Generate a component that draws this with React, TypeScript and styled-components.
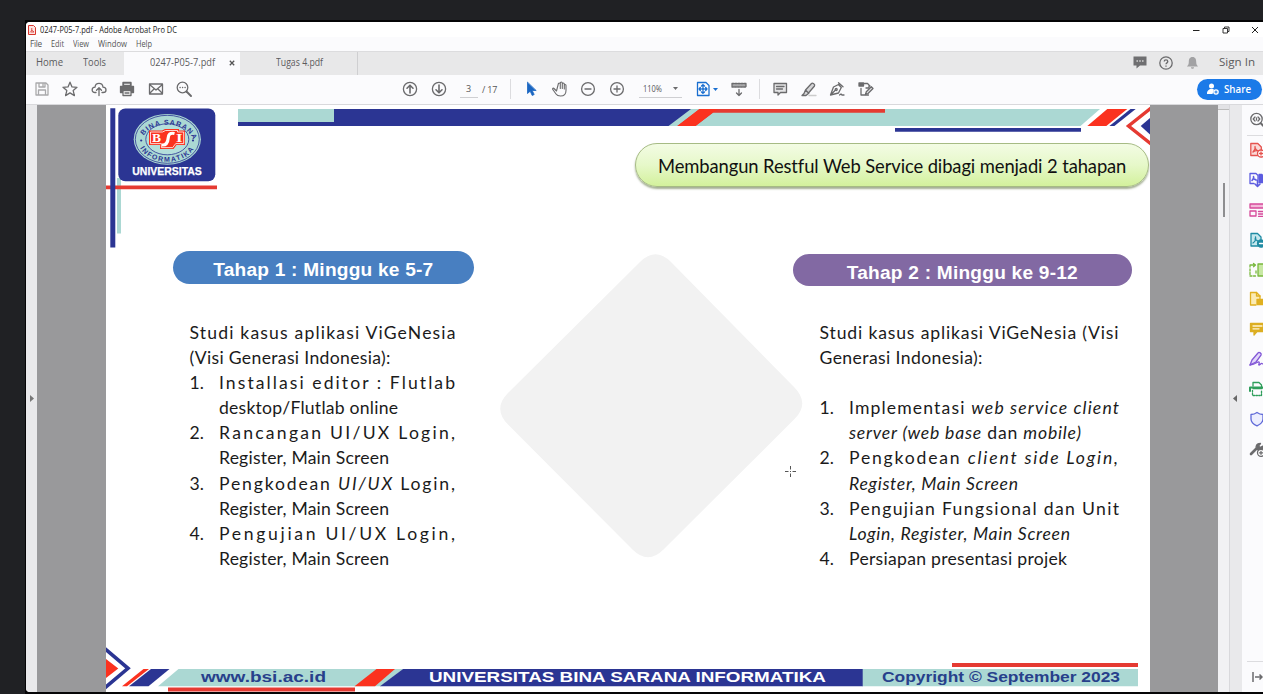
import React, { useLayoutEffect, useRef } from "react";
import styled, { createGlobalStyle } from "styled-components";

const NAVY = "#2b3593";
const RED = "#fb321f";
const LINE_RED = "#e53a32";
const TEAL = "#abd8d3";
const GREY = "#6b6b6d";

const GlobalStyle = createGlobalStyle`
  * { box-sizing: border-box; }
  body { margin: 0; background: #202124; overflow: hidden; }
  svg { display: block; flex: none; overflow: visible; }
`;

/* Text tracked out, or stretched, so that a line fills exactly the given width. */
const FitText = styled.span`
  display: inline-block;
  white-space: pre;
  transform-origin: 0 50%;
`;
const FitBox = styled.span<{ $w: number }>`
  display: inline-block;
  flex: none;
  width: ${(p) => p.$w}px;
  white-space: nowrap;
`;

function Fit({ w, stretch, children }: { w: number; stretch?: boolean; children: React.ReactNode }) {
  const ref = useRef<HTMLSpanElement>(null);
  useLayoutEffect(() => {
    const el = ref.current;
    if (!el) return;
    el.style.letterSpacing = "0px";
    el.style.transform = "none";
    const natural = el.getBoundingClientRect().width;
    if (stretch) {
      el.style.transform = `scaleX(${w / natural})`;
    } else {
      const count = (el.textContent || "").length;
      el.style.letterSpacing = (w - natural) / Math.max(1, count - 1) + "px";
    }
  }, [w, stretch]);
  return (
    <FitBox $w={w}>
      <FitText ref={ref}>{children}</FitText>
    </FitBox>
  );
}

/* ---------- window ---------- */

const Desktop = styled.div`
  height: 694px;
  padding: 20px 0 0 25px;
  overflow: hidden;
  background: #202124;
`;
const Frame = styled.div`
  height: 674px;
  padding: 2px 0 2.5px 1px;
  background: #050506;
`;
const Window = styled.div`
  display: flex;
  flex-direction: column;
  height: 669.5px;
  overflow: hidden;
  border-radius: 4px 0 0 4px;
  background: #fbfbfd;
  font-family: "Open Sans", "Noto Sans", sans-serif;
`;
const TitleBar = styled.div`
  display: flex;
  align-items: center;
  height: 15px;
  padding-left: 2px;
  background: #fff;
  font-size: 8.8px;
  color: #222;
`;
const TitleText = styled.div`
  flex: 1;
  margin-left: 4px;
  line-height: 16px;
`;
const Controls = styled.div`
  display: flex;
  align-items: center;
  gap: 21.5px;
  margin-right: 4px;
`;
const MenuBar = styled.div`
  display: flex;
  gap: 9px;
  height: 14px;
  padding-left: 4px;
  font-size: 8.2px;
  line-height: 13px;
  color: #555;
`;
const TabBar = styled.div`
  display: flex;
  height: 24px;
  background: #e8e8e9;
  border-top: 1px solid #dcdcde;
  font-size: 10.4px;
  line-height: 21px;
  color: #5b5b5d;
`;
const PlainTab = styled.div<{ $w: number; $pad: number }>`
  width: ${(p) => p.$w}px;
  padding-left: ${(p) => p.$pad}px;
`;
const FileTab = styled.div<{ $active?: boolean }>`
  display: flex;
  gap: 14px;
  width: 117px;
  padding-left: ${(p) => (p.$active ? 26 : 35)}px;
  background: ${(p) => (p.$active ? "#fbfbfd" : "transparent")};
  border-right: 1px solid ${(p) => (p.$active ? "#e8e8e9" : "#cfcfd1")};
  svg { margin-top: 7.5px; }
`;
const AccountArea = styled.div`
  display: flex;
  align-items: center;
  height: 21px;
  margin-left: auto;
  padding-right: 8.5px;
  svg + svg { margin-left: 12.5px; }
`;
const SignIn = styled.div`
  margin-left: 20px;
`;
const Toolbar = styled.div`
  display: flex;
  align-items: center;
  height: 30px;
  padding: 0 0 1px 7.5px;
  border-bottom: 1px solid #d9d9dc;
  font-size: 9px;
  color: #555;
`;
const IconGroup = styled.div<{ $gap: number; $ml?: number }>`
  display: flex;
  align-items: center;
  gap: ${(p) => p.$gap}px;
  margin-left: ${(p) => p.$ml || 0}px;
`;
const Field = styled.div<{ $w: number; $ml: number; $pad: number }>`
  display: flex;
  align-items: center;
  justify-content: space-between;
  width: ${(p) => p.$w}px;
  height: 18px;
  margin-left: ${(p) => p.$ml}px;
  padding: 0 ${(p) => p.$pad}px;
  border-bottom: 1px solid #cfcfd2;
`;
const PageTotal = styled.div`
  width: 20px;
  margin-left: 4px;
  white-space: nowrap;
`;
const Divider = styled.div<{ $ml: number }>`
  width: 1px;
  height: 20px;
  margin-left: ${(p) => p.$ml}px;
  background: #dcdcdf;
`;
const ShareButton = styled.div`
  display: flex;
  align-items: center;
  gap: 5px;
  flex: none;
  width: 65px;
  height: 21px;
  margin-left: auto;
  margin-right: 1px;
  padding-left: 10px;
  border-radius: 11px;
  background: #1b7ae8;
  color: #fff;
  font-size: 10.3px;
  font-weight: 600;
`;

/* ---------- work area ---------- */

const Work = styled.div`
  display: flex;
  flex: 1;
  min-height: 0;
`;
const Rail = styled.div<{ $w: number; $pr?: number }>`
  display: flex;
  align-items: center;
  justify-content: center;
  width: ${(p) => p.$w}px;
  padding-right: ${(p) => p.$pr || 0}px;
  background: #e9e9eb;
`;
const Canvas = styled.div`
  display: flex;
  width: 1181px;
  padding: 0 69px;
  background: #99999b;
`;
const ScrollTrack = styled.div`
  display: flex;
  flex-direction: column;
  align-items: center;
  width: 12px;
  background: #f1f1f4;
  border-right: 1px solid #d8d8dc;
`;
const ScrollCap = styled.div`
  width: 11px;
  height: 5px;
  background: #e2e2e5;
  border-bottom: 1px solid #bbb;
`;
const Thumb = styled.div`
  width: 2px;
  height: 34px;
  margin-top: 73px;
  background: #8e8e91;
`;
const ToolPane = styled.div`
  display: flex;
  flex-direction: column;
  width: 21px;
  padding: 7px 0 0 7px;
  overflow: hidden;
  background: #fbfbfd;
`;
const ToolSlot = styled.div<{ $h?: number }>`
  display: flex;
  align-items: center;
  flex: none;
  height: ${(p) => p.$h || 29.9}px;
`;
const PaneRule = styled.div`
  flex: none;
  height: 1px;
  margin: 7px 0 -1px -2px;
  background: #dcdcdf;
`;
const PaneFoot = styled.div`
  margin: auto 0 0 -2px;
  height: 31px;
  padding: 9px 0 0 4px;
  border-top: 1px solid #dcdcdf;
`;

/* ---------- slide ---------- */

const Slide = styled.div`
  display: flex;
  flex-direction: column;
  width: 1043.5px;
  flex: none;
  background: #fff;
  overflow: hidden;
`;
const SlideHeader = styled.div`
  display: flex;
  height: 146px;
`;
const HeaderRight = styled.div`
  display: flex;
  flex-direction: column;
  align-items: flex-end;
  width: 911px;
`;
const TitlePill = styled.div`
  display: flex;
  align-items: center;
  justify-content: center;
  width: 514px;
  height: 44px;
  padding-top: 1px;
  border: 1px solid #a6bb84;
  border-radius: 22px;
  background: linear-gradient(#f3fce4, #e6f8c9 50%, #d3f19c);
  box-shadow: 0 2px 2px rgba(90, 110, 60, 0.55);
  font-family: Lato, Carlito, sans-serif;
  font-size: 18.4px;
  color: #111;
`;
const Columns = styled.div`
  display: flex;
  height: 392px;
  padding-left: 66.5px;
`;
const Stage = styled.div<{ $w: number; $top: number }>`
  width: ${(p) => p.$w}px;
  padding-top: ${(p) => p.$top}px;
`;
const StageTitle = styled.div<{ $color: string }>`
  display: flex;
  align-items: center;
  justify-content: center;
  height: 32.5px;
  padding-top: 6px;
  border-radius: 17px;
  background: ${(p) => p.$color};
  color: #fff;
  font: bold 19.1px "Liberation Sans", Arial, sans-serif;
`;
const StageText = styled.div<{ $pad: number; $top: number }>`
  padding: ${(p) => p.$top}px 0 0 ${(p) => p.$pad}px;
  font-family: Lato, Carlito, sans-serif;
  font-size: 17.6px;
  line-height: 25.2px;
  color: #1b1b1b;
`;
const Line = styled.div`
  display: flex;
  height: 25.2px;
  white-space: nowrap;
`;
const Num = styled.div`
  width: 29.5px;
`;
const Middle = styled.div`
  width: 318.5px;
  padding: 3px 0 0 25px;
`;
const Footer = styled.div`
  position: relative;
  display: flex;
  height: 48px;
  padding-top: 26px;
  font: bold 14px/17px "Liberation Sans", Arial, sans-serif;
  color: #fff;
`;
const FooterArt = styled.svg`
  position: absolute;
  left: 0;
  top: 0;
`;
const FooterLabel = styled.div<{ $ml: number; $w: number; $dark?: boolean }>`
  position: relative;
  width: ${(p) => p.$w}px;
  margin-left: ${(p) => p.$ml}px;
  white-space: nowrap;
  color: ${(p) => (p.$dark ? "#27408b" : "#fff")};
`;

/* ---------- icons ---------- */

function Icon({ s = 16, c = GREY, w = 1.3, children }: { s?: number; c?: string; w?: number; children: React.ReactNode }) {
  return (
    <svg width={s} height={s} viewBox="0 0 16 16" fill="none" stroke={c} strokeWidth={w} strokeLinejoin="round" strokeLinecap="round">
      {children}
    </svg>
  );
}

const Caret = ({ c = GREY }: { c?: string }) => (
  <svg width="5" height="3" viewBox="0 0 5 3"><path d="M0 0h5L2.5 3z" fill={c} /></svg>
);

function Logo() {
  return (
    <svg width="132" height="146" viewBox="106 105 132 146">
      <defs>
        <path id="arcTop" d="M141.500 141A26 19 0 0 1 193 141" />
        <path id="arcBottom" d="M137.800 139.500A29.500 22.300 0 0 0 196.800 139.500" />
      </defs>
      <path d="M117 178h4v55.500h-4z" fill={TEAL} />
      <path d="M106 185.600h111v3.600H106z" fill={LINE_RED} />
      <path d="M110.300 108.300h5v139.200h-5z" fill={NAVY} />
      <rect x="118.300" y="108.400" width="97" height="72.800" rx="7" fill={NAVY} />
      <ellipse cx="167.300" cy="139.300" rx="33.600" ry="25.400" fill={TEAL} />
      <ellipse cx="167.300" cy="139.300" rx="32" ry="24" fill="none" stroke={NAVY} strokeWidth="0.800" />
      <ellipse cx="167.300" cy="139.300" rx="21.500" ry="15.500" fill="#b4dfdb" stroke={NAVY} strokeWidth="0.800" />
      <g fontFamily="Liberation Sans, Arial, sans-serif" fontWeight="bold" fill={NAVY} fontSize="7">
        <text textLength="58"><textPath href="#arcTop" startOffset="6">BINA SARANA</textPath></text>
        <text textLength="62"><textPath href="#arcBottom" startOffset="9">INFORMATIKA</textPath></text>
      </g>
      <circle cx="141.200" cy="140.500" r="1.100" fill={NAVY} />
      <circle cx="193" cy="140.500" r="1.100" fill={NAVY} />
      <path d="M149 130.500h13l3-1.500h14v1.500h6V145h-8.500l-3 4h-13.500v-4h-11z" fill={RED} />
      <path d="M150.500 132h12l3-1.500h12v1.500h6.200v11.600h-8l-3 4h-11.300v-4h-10.900z" fill="none" stroke="#fff" strokeWidth="0.800" />
      <path d="M174.500 133.500c-4.500-1-6 1-6.300 4.300-.3 4-1.700 7.500-6.200 7.200" fill="none" stroke="#fff" strokeWidth="3.200" />
      <g fontFamily="Liberation Serif, Times New Roman, serif" fontWeight="bold" fill="#fff">
        <text x="152" y="142.300" fontSize="12" textLength="9" lengthAdjust="spacingAndGlyphs">B</text>
        <text x="176" y="142.300" fontSize="12" textLength="6.500" lengthAdjust="spacingAndGlyphs">I</text>
      </g>
      <text x="132.300" y="174.500" fill="#fff" stroke="#fff" strokeWidth="0.250" fontFamily="Liberation Sans, Arial, sans-serif" fontWeight="bold" fontSize="10.300" textLength="69.500" lengthAdjust="spacingAndGlyphs">UNIVERSITAS</text>
    </svg>
  );
}

function BannerArt() {
  return (
    <svg width="911" height="38" viewBox="238 105 911 38">
      <path d="M238 109h862l-19.500 17H238z" fill={TEAL} />
      <path d="M334 109h357l-22.500 17H238v-4h96z" fill={NAVY} />
      <path d="M699.500 109H885v3.800H713L695.500 126h-18.200z" fill={LINE_RED} />
      <path d="M699.500 109h18L695.500 126h-18.200z" fill={RED} />
      <path d="M895 128h186v3.700H895z" fill={NAVY} />
      <path d="M1107.300 109h20l-21 17h-19z" fill={RED} />
      <path d="M1130.500 109h5.200l-21.300 17h-5z" fill={NAVY} />
      <path d="M1151 108l-22.500 18L1151 144" fill="none" stroke={LINE_RED} strokeWidth="3.400" />
      <path d="M1150 118l-9.300 8 9.300 8.500z" fill={NAVY} />
    </svg>
  );
}

function Diamond() {
  return (
    <svg width="306" height="306" viewBox="499 254 306 306">
      <path d="M640 262q15.500-15.500 31 0L794.500 387.500q15.500 16 0 31.500L663.500 549.500q-15.500 15.500-31 0L508 424.500q-15.500-16 0-31.500z" fill="#f2f2f2" />
      <path d="M785 471.500h3.500M790 471.500h1M792.500 471.500h3.500M790.500 466v3.500M790.500 473.500v3.500" stroke="#555" strokeWidth="1" />
    </svg>
  );
}

const sideIcons: { c: string; art: React.ReactNode }[] = [
  { c: "#e5534f", art: <><path d="M9 13.500H1.800V1.500h7l3.500 3.500v3" fill="#fad9d7" /><path d="M4 10c2-2 2.500-4 2-5.500M6 6c1 2 2 3 4 3M4 10c2-1.500 4-2 6-1" /><circle cx="12" cy="11.500" r="3.500" fill="#fff" /><path d="M10.500 11.500h3M12 10v3" /></> },
  { c: "#5c5ce0", art: <><path d="M5 11.500H1V1.500h6l2 2V7" /><path d="M10 2.500h3l1 1.500h4v6.500h-8z" fill="#5c5ce0" /><path d="M3 8.500c2-2 2-3 1.500-4M4.500 6.500L7 8M8.500 8v6M6 12l2.500 2.500L11 12" strokeWidth="1.600" /></> },
  { c: "#d6499a", art: <><path d="M1 2h15v4H1z" fill="#f3b9da" /><path d="M1 9h6v5H1zM9.500 9.500H16M9.500 12H16M9.500 14.300H16" /></> },
  { c: "#1f8ba3", art: <><path d="M9 14H2V1.500h6.500L12 5v3" fill="#c6e8ee" /><path d="M4 11c3-2 3-4 2.500-6M6 7l4 3" /><circle cx="12" cy="11.500" r="3.500" fill="#1f8ba3" /><path d="M10.500 11.500h3" stroke="#fff" /></> },
  { c: "#79b83e", art: <><path d="M9 2h7v12H9z" fill="#c8e8a4" /><path d="M1 7v7h6M7 11V8" strokeDasharray="2 1.500" /><path d="M1 5V3h5M4.500 1.500L6.500 3 4.500 4.700" /></> },
  { c: "#e0b020", art: <><path d="M7 14H1.500V1.500h6L11 5v3" fill="#fbebb4" /><path d="M7.500 1.500V5H11" /><path d="M8 8.500h8v5H8z" fill="#e0b020" /></> },
  { c: "#dcae22", art: <><path d="M1.500 2.500h14v8H8l-3 3.500v-3.500H1.500z" fill="#dcae22" /><path d="M4 5h9M4 7.800h6" stroke="#fff4d0" /></> },
  { c: "#8257d6", art: <><path d="M1 14l2-5L9 2c1-1.500 4 .500 3 2.200L7 11z" fill="#e2d6fa" /><path d="M1 14c6-.500 8-4 9-3s-1 3 0 3 2-2 3-1.500 1 1 3 .5" /></> },
  { c: "#2e9e5b", art: <><path d="M4 5V1.500h6L12.500 4v3M4 7.500h9" /><path d="M1 10V6.500h15V10" strokeWidth="2" /><path d="M3.500 9.500v5h9v-5" strokeDasharray="1.500 1.300" /></> },
  { c: "#5f69d8", art: <path d="M8 1.500c2 1.500 4 2 6 2v4.500c0 3.500-3 5.500-6 6.800C5 13.500 2 11.500 2 8V3.500c2 0 4-.500 6-2z" fill="#eceefe" /> },
  { c: "#6b6b6d", art: <><path d="M2 13L7 8" strokeWidth="2.600" /><path d="M11.500 2.500L9.500 5l1.500 1.500 3-1.500c.5 3-2 5-5 4C6 7.500 6.500 2.500 11.500 2.500z" fill="#6b6b6d" /><circle cx="12" cy="11.800" r="3.500" fill="#fff" /><path d="M10.500 11.800h3M12 10.300v3" /></> },
];

/* ---------- content ---------- */

type Row = { n?: string; w: number; t: React.ReactNode };

const stageOne: Row[] = [
  { w: 266, t: "Studi kasus aplikasi ViGeNesia" },
  { w: 201, t: "(Visi Generasi Indonesia):" },
  { n: "1.", w: 236, t: "Installasi editor : Flutlab" },
  { n: " ", w: 179, t: "desktop/Flutlab online" },
  { n: "2.", w: 236, t: "Rancangan UI/UX Login," },
  { n: " ", w: 170, t: "Register, Main Screen" },
  { n: "3.", w: 236, t: <>Pengkodean <i>UI/UX</i> Login,</> },
  { n: " ", w: 170, t: "Register, Main Screen" },
  { n: "4.", w: 236, t: "Pengujian UI/UX Login," },
  { n: " ", w: 170, t: "Register, Main Screen" },
];

const stageTwo: Row[] = [
  { w: 299, t: "Studi kasus aplikasi ViGeNesia (Visi" },
  { w: 163, t: "Generasi Indonesia):" },
  { w: 0, t: "" },
  { n: "1.", w: 270, t: <>Implementasi <i>web service client</i></> },
  { n: " ", w: 232, t: <><i>server (web base</i> dan <i>mobile)</i></> },
  { n: "2.", w: 269, t: <>Pengkodean <i>client side Login,</i></> },
  { n: " ", w: 169, t: <i>Register, Main Screen</i> },
  { n: "3.", w: 270, t: "Pengujian Fungsional dan Unit" },
  { n: " ", w: 221, t: <i>Login, Register, Main Screen</i> },
  { n: "4.", w: 218, t: "Persiapan presentasi projek" },
];

const Rows = ({ rows }: { rows: Row[] }) => (
  <>
    {rows.map((r, i) => (
      <Line key={i}>
        {r.n && <Num>{r.n}</Num>}
        {r.w > 0 && <Fit w={r.w}>{r.t}</Fit>}
      </Line>
    ))}
  </>
);

function SlidePage() {
  return (
    <Slide>
      <SlideHeader>
        <Logo />
        <HeaderRight>
          <BannerArt />
          <TitlePill><Fit w={468}>Membangun Restful Web Service dibagi menjadi 2 tahapan</Fit></TitlePill>
        </HeaderRight>
      </SlideHeader>
      <Columns>
        <Stage $w={301.5} $top={0}>
          <StageTitle $color="#487fc1"><Fit w={220}>Tahap 1 : Minggu ke 5-7</Fit></StageTitle>
          <StageText $pad={17} $top={36}><Rows rows={stageOne} /></StageText>
        </Stage>
        <Middle><Diamond /></Middle>
        <Stage $w={339.5} $top={2.5}>
          <StageTitle $color="#8269a3"><Fit w={231}>Tahap 2 : Minggu ke 9-12</Fit></StageTitle>
          <StageText $pad={27} $top={33.5}><Rows rows={stageTwo} /></StageText>
        </Stage>
      </Columns>
      <Footer>
        <FooterArt width="1043" height="48" viewBox="106 643 1043 48">
          <path d="M104 648l24 20.300L104 688.500" fill="none" stroke={NAVY} strokeWidth="3.600" />
          <path d="M106 659l12.300 9.500L106 678z" fill={RED} />
          <path d="M143.500 669h5.500l-22 17.200h-5z" fill={RED} />
          <path d="M151 669h18.500l-21 17.200H129z" fill={NAVY} />
          <path d="M178.500 669H403l-22 17.200H158z" fill={TEAL} />
          <path d="M376.500 669H395l-20 17.200h-20.500z" fill={RED} />
          <path d="M403 669h460v17.200H380z" fill={NAVY} />
          <path d="M862.700 669H1138v17.200H862.700z" fill={TEAL} />
          <path d="M952 663h186v4H952zM168 687.600h187v4H168z" fill={LINE_RED} />
        </FooterArt>
        <FooterLabel $ml={95} $w={125} $dark><Fit w={125} stretch>www.bsi.ac.id</Fit></FooterLabel>
        <FooterLabel $ml={103} $w={397}><Fit w={397} stretch>UNIVERSITAS BINA SARANA INFORMATIKA</Fit></FooterLabel>
        <FooterLabel $ml={56} $w={238} $dark><Fit w={238} stretch>Copyright © September 2023</Fit></FooterLabel>
      </Footer>
    </Slide>
  );
}

export default function App() {
  return (
    <Desktop>
      <GlobalStyle />
      <Frame>
        <Window>
          <TitleBar>
            <svg width="8" height="10" viewBox="0 0 8 10"><path d="M.5.500h5l2 2v7h-7z" fill="#fbe3e1" stroke="#d9362d" /><path d="M2 7.500c2-2 2-3 1.700-4.500M3.700 5l2.300 2H3" stroke="#d9362d" strokeWidth=".8" fill="none" /></svg>
            <TitleText><Fit w={137} stretch>0247-P05-7.pdf - Adobe Acrobat Pro DC</Fit></TitleText>
            <Controls>
              <svg width="8" height="8"><path d="M1 4.500h6.500" stroke="#222" /></svg>
              <svg width="8" height="8" fill="none" stroke="#222"><path d="M1 2.500h4.500v4.500H1zM2.500 2V1h4.500v4.500H6" strokeWidth=".9" /></svg>
              <svg width="8" height="8" stroke="#222"><path d="M1 1l6 6M7 1L1 7" /></svg>
            </Controls>
          </TitleBar>
          <MenuBar>
            <Fit w={12}>File</Fit><Fit w={13} stretch>Edit</Fit><Fit w={16} stretch>View</Fit><Fit w={29} stretch>Window</Fit><Fit w={16} stretch>Help</Fit>
          </MenuBar>
          <TabBar>
            <PlainTab $w={46} $pad={10}><Fit w={27} stretch>Home</Fit></PlainTab>
            <PlainTab $w={52} $pad={10.5}><Fit w={23} stretch>Tools</Fit></PlainTab>
            <FileTab $active>
              <Fit w={65} stretch>0247-P05-7.pdf</Fit>
              <svg width="6" height="6" stroke="#555" strokeWidth="1.300"><path d="M.8.800l4.400 4.400M5.200.800L.8 5.200" /></svg>
            </FileTab>
            <FileTab><Fit w={47} stretch>Tugas 4.pdf</Fit></FileTab>
            <AccountArea>
              <svg width="14" height="13" viewBox="0 0 14 13"><path d="M.5.500h13v9H7l-3.500 3v-3h-3z" fill="#6f6f71" /><path d="M3.500 5h1.400M6.300 5h1.400M9.100 5h1.400" stroke="#ddd" strokeWidth="1.300" /></svg>
              <svg width="14" height="14" viewBox="0 0 14 14" fill="none" stroke={GREY} strokeWidth="1.300"><circle cx="7" cy="7" r="6.200" /><path d="M5.200 5.600c0-2.400 3.600-2.400 3.600 0 0 1.300-1.800 1.300-1.800 2.700M7 9.500v1.300" /></svg>
              <svg width="13" height="14" viewBox="0 0 13 14" fill="#a2a2a4"><path d="M6.500 1c3 0 3.700 2.500 3.700 5S11 9 12 10.500H1C2 9 2.800 8.500 2.800 6S3.500 1 6.500 1zM5 11.300h3c0 2-3 2-3 0z" /></svg>
              <SignIn><Fit w={36} stretch>Sign In</Fit></SignIn>
            </AccountArea>
          </TabBar>
          <Toolbar>
            <IconGroup $gap={12.6}>
              <Icon c="#a9a9ab"><path d="M2 2h10l2 2v10H2zM5 2v4h6V2M4.500 14V9h7v5M9 3v2" /></Icon>
              <Icon><path d="M8 1.200l2 4.700 5 .4-3.800 3.300 1.200 5L8 11.900l-4.400 2.700 1.200-5L1 6.300l5-.4z" /></Icon>
              <Icon><path d="M5 11.500H4C.2 11.500.2 6.500 4 6.200c.5-5 7.500-5 8 0 4 .3 4 5.300 0 5.300h-1M8 14.500V7M5.500 9.300L8 6.800l2.500 2.500" /></Icon>
              <Icon><path d="M4 4.500v-3h8v3M1.500 11.500v-6h13v6h-2v-2h-9v2z" fill={GREY} /><path d="M4.500 2h7v2.500h-7z" fill="#fff" /><path d="M4 9.500h8v5H4z" fill="#fff" /><path d="M6 12h4" /></Icon>
              <Icon><path d="M1.500 3h13v10h-13zM1.500 3.500L8 9l6.500-5.500M1.500 12.500L6 8M14.500 12.500L10 8" /></Icon>
              <Icon><circle cx="6.500" cy="6.500" r="5.300" /><path d="M10.500 10.500l4.500 4.500" strokeWidth="2" /><path d="M4 6.500h.2M6.500 6.500h.2M9 6.500h.2" /></Icon>
            </IconGroup>
            <IconGroup $gap={12.5} $ml={210}>
              <Icon><circle cx="8" cy="8" r="6.600" /><path d="M8 12V4.500M5 7.200l3-3 3 3" strokeWidth="1.600" /></Icon>
              <Icon><circle cx="8" cy="8" r="6.600" /><path d="M8 4v7.500M5 8.800l3 3 3-3" strokeWidth="1.600" /></Icon>
            </IconGroup>
            <Field $w={18} $ml={13} $pad={6}>3</Field>
            <PageTotal><Fit w={15.5}>/ 17</Fit></PageTotal>
            <Divider $ml={8} />
            <IconGroup $gap={12.4} $ml={12.5}>
              <Icon c="#1a66c2"><path d="M4.500 1.500v11l2.700-2.300 2 4.300 2-1-2-4h3.600z" fill="#1a66c2" strokeWidth=".8" /></Icon>
              <Icon w={1.1}><path d="M4.500 10L2 7.500C1 6.500 0 7.500 1 8.800L4 13c1 1.500 2.500 2 4.500 2 3.500 0 5.500-2 5.500-5.500V4.500c0-1.300-1.700-1.300-1.700 0V8 3c0-1.300-2-1.300-2 0v4.500V2c0-1.300-2-1.300-2 0v5.500V3c0-1.300-2-1.300-2 0z" /></Icon>
              <Icon><circle cx="8" cy="8" r="6.400" /><path d="M5 8h6" /></Icon>
              <Icon><circle cx="8" cy="8" r="6.400" /><path d="M5 8h6M8 5v6" /></Icon>
            </IconGroup>
            <Field $w={43} $ml={14} $pad={4}><Fit w={19} stretch>110%</Fit><Caret /></Field>
            <IconGroup $gap={2} $ml={13}>
              <Icon c="#1a6fd0"><path d="M2.500 1.500H11L14 4.500v10H2.500z" /><path d="M8 3.500v9M4 8h8M6.500 5L8 3.500 9.500 5M6.500 11L8 12.500 9.500 11M5.300 6.500L4 8l1.300 1.500M10.700 6.500L12 8l-1.300 1.500" strokeDasharray="2 1" /></Icon>
              <Caret c="#1a6fd0" />
            </IconGroup>
            <IconGroup $gap={0} $ml={13}>
              <Icon><path d="M1 2.500h14v3.500H1z" fill="#a9a9ab" strokeDasharray="2 1" /><path d="M8 8.500v6M5.500 12L8 14.500l2.500-2.500" /></Icon>
            </IconGroup>
            <Divider $ml={12} />
            <IconGroup $gap={12.5} $ml={12.5}>
              <Icon><path d="M2 2.500h12.500v9H8.500L6 14v-2.500H2z" fill="#e4e4e6" /><path d="M4.500 5.500h7.500M4.500 8h6" /></Icon>
              <Icon><path d="M8 14.500h7" stroke="#ccc" /><path d="M4.500 9l6-6.500c1-1 4 1 3 2.500L7.500 12zM4.500 9L3 12.500 1 14.500h4l3-2.500" fill="#d4d4d6" /></Icon>
              <Icon><path d="M9.500 1.800l4.500 4M9.500 3.500L4.500 6 1.500 14l8-2 2.800-5.500zM1.500 14l5-5M10.500 14l1.500-1 1 1h2" /><circle cx="7.200" cy="8.500" r="1" /></Icon>
              <Icon><path d="M6 2.500h3.500L12 5M3 7.500v6.500h7.500M11 4v3H8" /><path d="M15 7.500l-5 5-2.500 1 .8-2.700 5-5z" fill="#e4e4e6" /><path d="M1 2h4.500v3H1z" fill={GREY} /></Icon>
            </IconGroup>
            <ShareButton>
              <svg width="12" height="12" viewBox="0 0 12 12" fill="#fff"><circle cx="4.500" cy="3" r="2.500" /><path d="M0 10.500c0-3 2-3.500 3-4.500h3c1 0 1 1 .5 2l-1 3H0z" /><circle cx="9" cy="9" r="2.800" /><path d="M7.500 9h3M9 7.500v3" stroke="#1b7ae8" /></svg>
              <Fit w={27} stretch>Share</Fit>
            </ShareButton>
          </Toolbar>
          <Work>
            <Rail $w={11}><svg width="4" height="7"><path d="M0 0l4 3.500L0 7z" fill="#777" /></svg></Rail>
            <Canvas><SlidePage /></Canvas>
            <ScrollTrack><ScrollCap /><Thumb /></ScrollTrack>
            <Rail $w={12} $pr={2}><svg width="4" height="7"><path d="M4 0L0 3.500 4 7z" fill="#666" /></svg></Rail>
            <ToolPane>
              <ToolSlot $h={16}>
                <Icon><circle cx="7.500" cy="7" r="5.700" /><path d="M11.700 11.200l4 4" strokeWidth="2" /><path d="M6 5L4.200 7 6 9M9 5l1.800 2L9 9M7.500 6v2" /></Icon>
              </ToolSlot>
              <PaneRule />
              <div>
                {sideIcons.map((it, i) => (
                  <ToolSlot key={i}><Icon c={it.c}>{it.art}</Icon></ToolSlot>
                ))}
              </div>
              <PaneFoot>
                <svg width="12" height="12" viewBox="0 0 12 12" fill="none" stroke={GREY} strokeWidth="1.500"><path d="M2 1v10M4 6h7M8.500 3.500L11 6 8.500 8.500" /></svg>
              </PaneFoot>
            </ToolPane>
          </Work>
        </Window>
      </Frame>
    </Desktop>
  );
}
